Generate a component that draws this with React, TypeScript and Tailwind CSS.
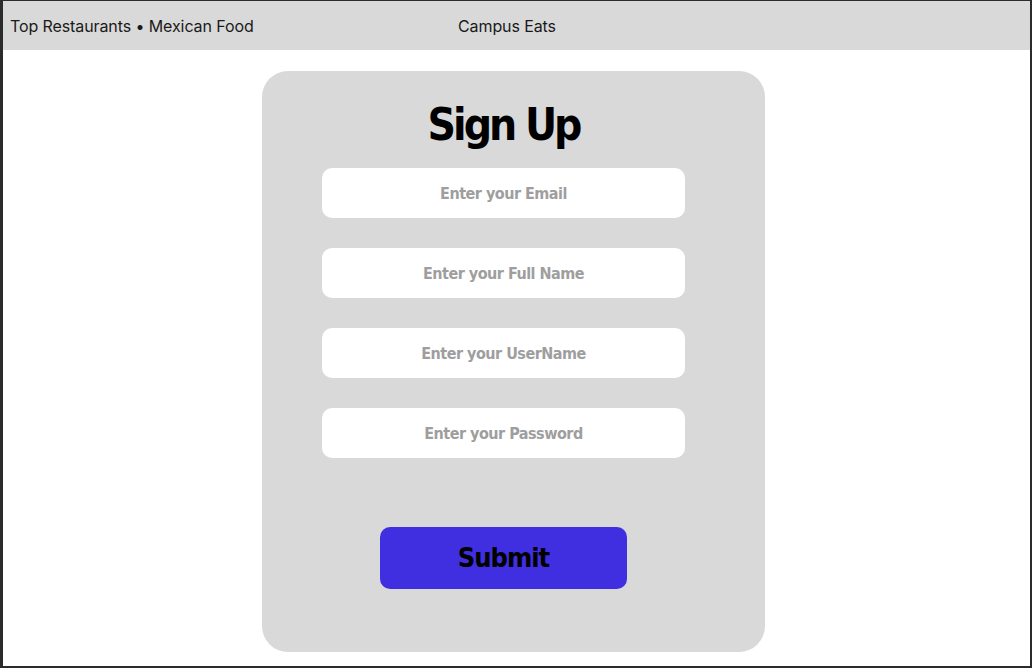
import { useState } from 'react';

// Sign up fields
const FIELDS = [
  { name: 'email', placeholder: 'Enter your Email', type: 'email' },
  { name: 'fullName', placeholder: 'Enter your Full Name', type: 'text' },
  { name: 'username', placeholder: 'Enter your UserName', type: 'text' },
  { name: 'password', placeholder: 'Enter your Password', type: 'password' },
];

const display = "font-['DejaVu_Sans_Condensed','DejaVu_Sans',sans-serif] font-stretch-condensed font-bold";

export default function App() {
  const [values, setValues] = useState<Record<string, string>>({});

  return (
    <div className="w-[1032px] h-[668px] bg-white border-l-[3px] border-t border-r-2 border-b-2 border-[#2b2b2b] overflow-hidden font-['Inter',sans-serif]">
      {/* top bar */}
      <header className="h-[49px] bg-[#d9d9d9] flex items-center pl-[7px] text-[16px] tracking-[-0.1px] text-[#1a1a1a]">
        <span className="w-[448px]">Top Restaurants • Mexican Food</span>
        <span>Campus Eats</span>
      </header>

      {/* card */}
      <div className="ml-[259px] mt-[21px] w-[503px] h-[581px] bg-[#d9d9d9] rounded-[26px] flex flex-col items-center pt-[28px] pr-[20px]">
        <h1 className={`${display} text-[44px] leading-[52px] tracking-[-3px] text-black`}>Sign Up</h1>

        <form className="mt-[17px] flex flex-col items-center gap-[30px]" onSubmit={(e) => e.preventDefault()}>
          {FIELDS.map((f) => (
            <input
              key={f.name}
              type={f.type}
              placeholder={f.placeholder}
              value={values[f.name] ?? ''}
              onChange={(e) => setValues({ ...values, [f.name]: e.target.value })}
              className={`${display} w-[363px] h-[50px] rounded-[10px] bg-white text-center text-[16px] tracking-[-0.5px] text-[#555] placeholder:text-[#9e9e9e] outline-none`}
            />
          ))}

          <button
            type="submit"
            className={`${display} mt-[39px] w-[247px] h-[62px] rounded-[10px] bg-[#3f2fe0] text-[27px] tracking-[-1px] text-black`}
          >
            Submit
          </button>
        </form>
      </div>
    </div>
  );
}
